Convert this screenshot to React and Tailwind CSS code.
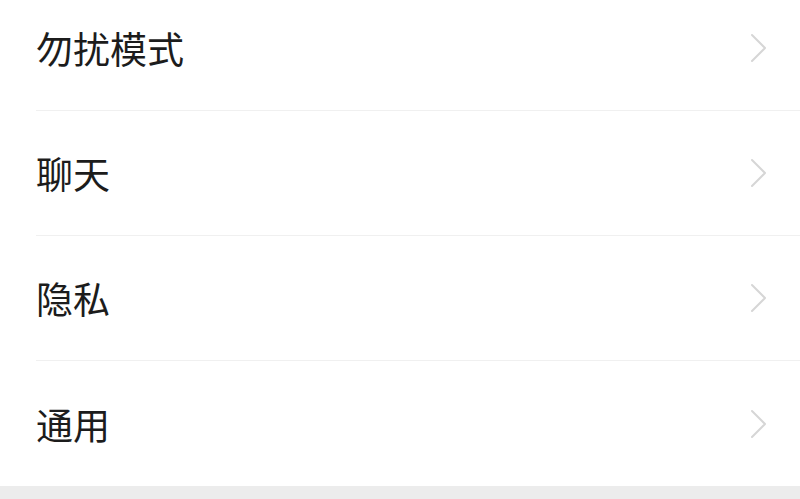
import React from "react";

const items = ["勿扰模式", "聊天", "隐私", "通用"];

function Chevron() {
  return (
    <svg width="18" height="30" viewBox="0 0 18 30" fill="none" className="shrink-0">
      <path d="M2 2 L15 15 L2 28" stroke="#d6d6d6" strokeWidth="2" strokeLinecap="round" strokeLinejoin="round" />
    </svg>
  );
}

export default function App() {
  return (
    <div
      className="w-[800px] h-[499px] overflow-hidden bg-[#ececec]"
      style={{ fontFamily: '"Noto Sans CJK SC", "Noto Sans", sans-serif' }}
    >
      <div className="bg-white -mt-[14px]">
        {items.map((t, i) => (
          <div key={t} className="pl-[36px]">
            <div
              className={
                "h-[125px] flex items-center justify-between pr-[32px] " +
                (i < items.length - 1 ? "border-b border-[#f0f0f0]" : "")
              }
            >
              <span className="text-[37px] leading-none text-[#1c1c1c] pt-[1px] pl-[0px]">{t}</span>
              <Chevron />
            </div>
          </div>
        ))}
      </div>
    </div>
  );
}
